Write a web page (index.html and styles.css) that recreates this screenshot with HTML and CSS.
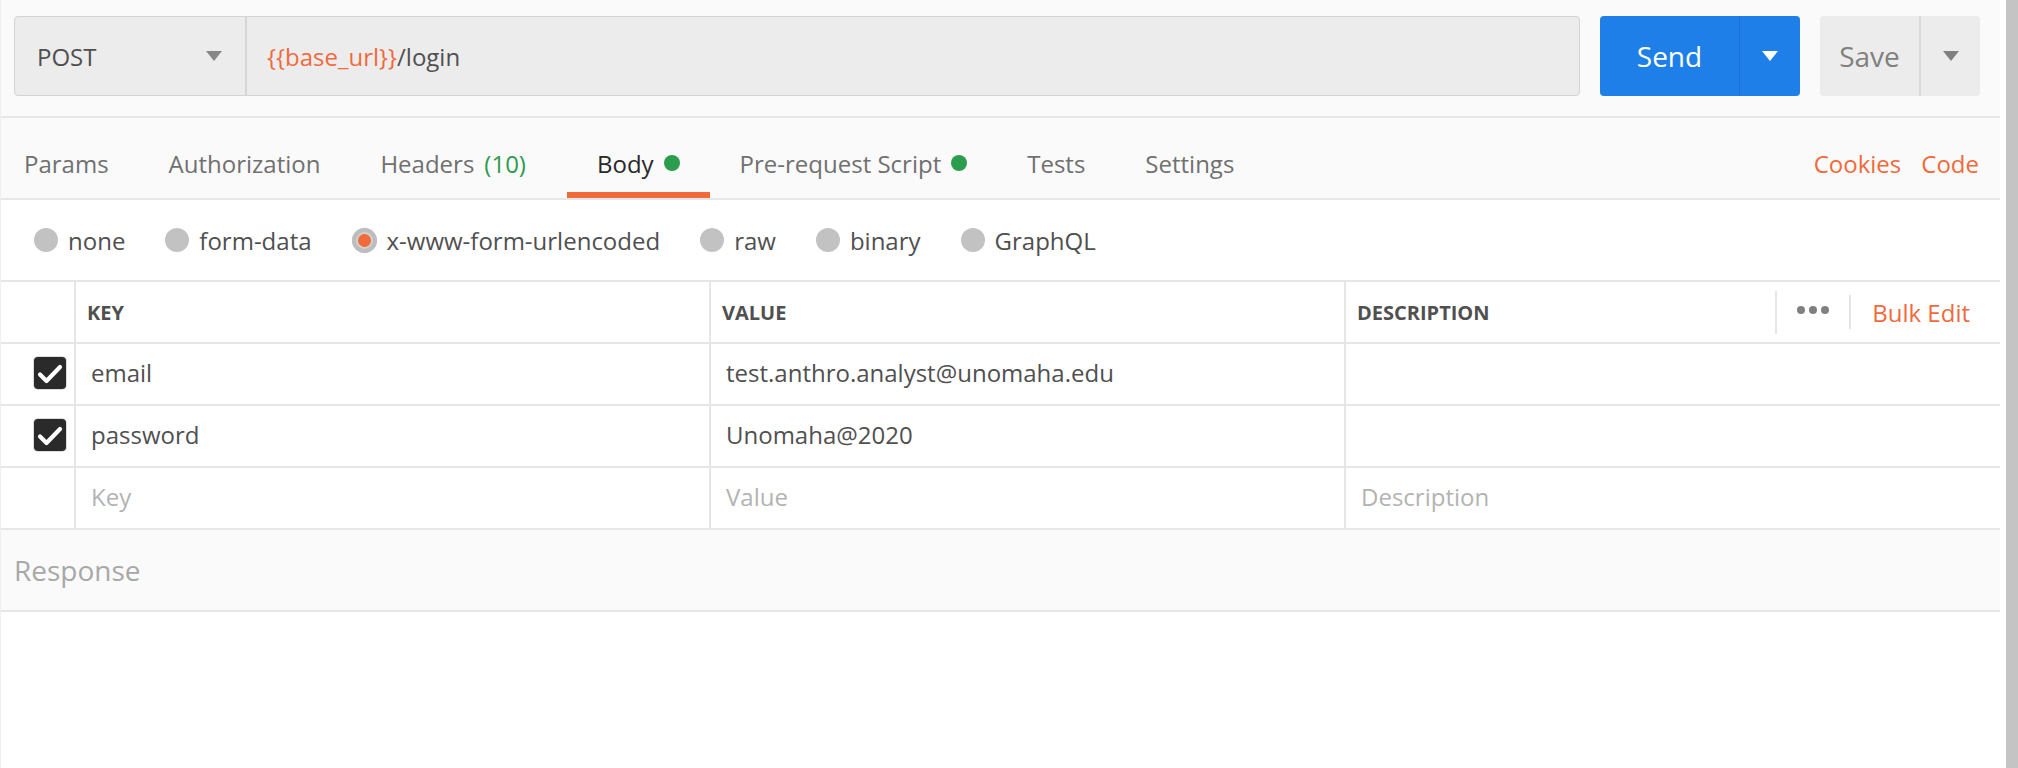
FILE: index.html
```html
<!DOCTYPE html>
<html lang="en">
<head>
<meta charset="utf-8">
<title>Request</title>
<link rel="stylesheet" href="styles.css">
</head>
<body>
<div class="window">
  <main class="app">
    <div class="urlbar">
      <div class="urlbox">
        <div class="method">
          <span>POST</span>
          <svg class="caret" width="16" height="10" viewBox="0 0 16 10"><polygon points="0,0 16,0 8,10" fill="#888888"/></svg>
        </div>
        <div class="url"><span class="var">{{base_url}}</span>/login</div>
      </div>
      <div class="send">
        <div class="send-main">Send</div>
        <div class="send-drop"><svg width="16" height="10" viewBox="0 0 16 10"><polygon points="0,0 16,0 8,10" fill="#ffffff"/></svg></div>
      </div>
      <div class="save">
        <div class="save-main">Save</div>
        <div class="save-drop"><svg width="16" height="10" viewBox="0 0 16 10"><polygon points="0,0 16,0 8,10" fill="#808080"/></svg></div>
      </div>
    </div>

    <nav class="tabs">
      <div class="tab first">Params</div>
      <div class="tab">Authorization</div>
      <div class="tab">Headers<span class="count">(10)</span></div>
      <div class="tab active">Body<span class="dot"></span></div>
      <div class="tab">Pre-request Script<span class="dot"></span></div>
      <div class="tab">Tests</div>
      <div class="tab">Settings</div>
      <div class="tabs-right">
        <span>Cookies</span>
        <span>Code</span>
      </div>
    </nav>

    <div class="bodytypes">
      <div class="radio-opt"><span class="radio"></span>none</div>
      <div class="radio-opt"><span class="radio"></span>form-data</div>
      <div class="radio-opt"><span class="radio on"><span class="pip"></span></span>x-www-form-urlencoded</div>
      <div class="radio-opt"><span class="radio"></span>raw</div>
      <div class="radio-opt"><span class="radio"></span>binary</div>
      <div class="radio-opt"><span class="radio"></span>GraphQL</div>
    </div>

    <div class="kv">
      <div class="kv-row head">
        <div class="cell check-cell"></div>
        <div class="cell">KEY</div>
        <div class="cell">VALUE</div>
        <div class="cell desc-head">
          <span>DESCRIPTION</span>
          <div class="head-actions">
            <span class="vsep tall"></span>
            <span class="dots"><i></i><i></i><i></i></span>
            <span class="vsep short"></span>
            <span class="bulk">Bulk Edit</span>
          </div>
        </div>
      </div>
      <div class="kv-row data">
        <div class="cell check-cell"><span class="checkbox"><svg width="32" height="32" viewBox="0 0 32 32"><polyline points="6,17.5 12.5,24 26,10" fill="none" stroke="#ffffff" stroke-width="4.2" stroke-linecap="round" stroke-linejoin="round"/></svg></span></div>
        <div class="cell">email</div>
        <div class="cell">test.anthro.analyst@unomaha.edu</div>
        <div class="cell"></div>
      </div>
      <div class="kv-row data">
        <div class="cell check-cell"><span class="checkbox"><svg width="32" height="32" viewBox="0 0 32 32"><polyline points="6,17.5 12.5,24 26,10" fill="none" stroke="#ffffff" stroke-width="4.2" stroke-linecap="round" stroke-linejoin="round"/></svg></span></div>
        <div class="cell">password</div>
        <div class="cell">Unomaha@2020</div>
        <div class="cell"></div>
      </div>
      <div class="kv-row data">
        <div class="cell check-cell"></div>
        <div class="cell placeholder">Key</div>
        <div class="cell placeholder">Value</div>
        <div class="cell placeholder">Description</div>
      </div>
    </div>

    <div class="response">Response</div>
    <div class="rest"></div>
  </main>
  <div class="gutter"></div>
  <div class="scrollbar"></div>
</div>
</body>
</html>
```

FILE: styles.css
```css
html, body {
  margin: 0;
  padding: 0;
  height: 768px;
  overflow: hidden;
}

body {
  font-family: "Open Sans", "Liberation Sans", sans-serif;
  color: #505050;
  background: #ffffff;
}

.window {
  display: flex;
  height: 768px;
}

.app {
  width: 2000px;
  flex: none;
  display: flex;
  flex-direction: column;
  box-sizing: border-box;
  border-left: 1px solid #efefef;
}

.gutter {
  width: 6px;
  flex: none;
  background: #ffffff;
}

.scrollbar {
  width: 12px;
  flex: none;
  background: #c4c4c4;
}

/* URL bar */
.urlbar {
  display: flex;
  gap: 20px;
  padding: 16px 20px 20px 13px;
  background: #fafafa;
  border-bottom: 2px solid #e6e6e6;
}

.urlbox {
  flex: 1;
  height: 80px;
  box-sizing: border-box;
  display: flex;
  background: #ececec;
  border: 1px solid #d3d3d3;
  border-radius: 4px;
}

.method {
  width: 232px;
  box-sizing: border-box;
  display: flex;
  align-items: center;
  justify-content: space-between;
  padding: 0 23px 0 22px;
  border-right: 2px solid #d6d6d6;
  font-size: 24px;
  color: #505050;
}

.url {
  display: flex;
  align-items: center;
  padding-left: 20px;
  font-size: 24px;
  color: #505050;
}

.var {
  color: #f06a3c;
}

.send {
  width: 200px;
  height: 80px;
  display: flex;
  background: #1f7fe9;
  border-radius: 4px;
  color: #ffffff;
}

.send-main {
  width: 139px;
  display: flex;
  align-items: center;
  justify-content: center;
  font-size: 28px;
  font-weight: 400;
  border-right: 1px solid #1a70d0;
}

.send-drop,
.save-drop {
  flex: 1;
  display: flex;
  align-items: center;
  justify-content: center;
}

.save {
  width: 160px;
  height: 80px;
  display: flex;
  background: #ececec;
  border-radius: 4px;
  color: #808080;
}

.save-main {
  width: 99px;
  display: flex;
  align-items: center;
  justify-content: center;
  font-size: 28px;
  font-weight: 400;
  border-right: 2px solid #dadada;
}

/* Tabs */
.tabs {
  display: flex;
  height: 80px;
  background: #fafafa;
  border-bottom: 2px solid #e6e6e6;
  padding-right: 21px;
}

.tab {
  display: flex;
  align-items: center;
  padding: 10px 30px 0;
  font-size: 24px;
  color: #707070;
  white-space: nowrap;
}

.tab.first {
  padding-left: 23px;
}

.tab.active {
  color: #282828;
  box-shadow: inset 0 -6px 0 #f06a3c;
}

.count {
  color: #2c9c4e;
  margin-left: 10px;
  margin-right: 11px;
}

.dot {
  width: 16px;
  height: 16px;
  border-radius: 50%;
  background: #2c9c4e;
  margin-left: 10px;
}

.tabs-right {
  margin-left: auto;
  display: flex;
  align-items: center;
  gap: 20px;
  padding-top: 10px;
  font-size: 24px;
  color: #f06a3c;
}

/* Body type radios */
.bodytypes {
  height: 80px;
  display: flex;
  align-items: center;
  gap: 40px;
  padding-left: 33px;
  border-bottom: 2px solid #e6e6e6;
  font-size: 24px;
  color: #505050;
}

.radio-opt {
  display: flex;
  align-items: center;
  gap: 10px;
}

.radio {
  width: 24px;
  height: 24px;
  border-radius: 50%;
  background: #c2c2c2;
  display: flex;
  align-items: center;
  justify-content: center;
}

.radio.on {
  width: 25px;
  height: 25px;
  background: #cfcfcf;
  box-shadow: inset 0 0 0 4px #bdbdbd;
}

.pip {
  width: 13px;
  height: 13px;
  border-radius: 50%;
  background: #f06a3c;
}

/* Key/value table */
.kv-row {
  display: grid;
  grid-template-columns: 73px 635px 635px 1fr;
  height: 62px;
  box-sizing: border-box;
  border-bottom: 2px solid #e6e6e6;
}

.cell {
  display: flex;
  align-items: center;
  padding-left: 15px;
  border-left: 2px solid #e6e6e6;
  font-size: 24px;
  color: #505050;
  white-space: nowrap;
}

.data .cell {
  padding-bottom: 4px;
}

.head .cell {
  padding-left: 11px;
  font-size: 20px;
  font-weight: 700;
  color: #505050;
}

.cell.check-cell {
  border-left: none;
  padding-left: 0;
  justify-content: flex-end;
  padding-right: 8px;
}

.data .cell.check-cell {
  padding-bottom: 2px;
}

.cell.placeholder {
  color: #b3b3b3;
}

.checkbox {
  width: 32px;
  height: 32px;
  border-radius: 4px;
  background: #2a2a2a;
  box-shadow: 0 0 0 1px #dcdcdc;
  display: flex;
}

.desc-head {
  justify-content: space-between;
}

.head-actions {
  display: flex;
  align-items: center;
  padding-right: 30px;
  font-weight: 400;
}

.vsep {
  width: 2px;
  background: #e6e6e6;
}

.vsep.tall {
  height: 43px;
}

.vsep.short {
  height: 34px;
}

.dots {
  display: flex;
  gap: 4px;
  padding: 0 20px 4px;
}

.dots i {
  width: 8px;
  height: 8px;
  border-radius: 50%;
  background: #808080;
}

.bulk {
  margin-left: 21px;
  font-size: 24px;
  font-weight: 400;
  color: #f06a3c;
}

/* Response */
.response {
  height: 80px;
  display: flex;
  align-items: center;
  padding-left: 13px;
  background: #fafafa;
  border-bottom: 2px solid #e6e6e6;
  font-size: 28px;
  color: #a8a8a8;
}

.rest {
  flex: 1;
  background: #ffffff;
}
```
